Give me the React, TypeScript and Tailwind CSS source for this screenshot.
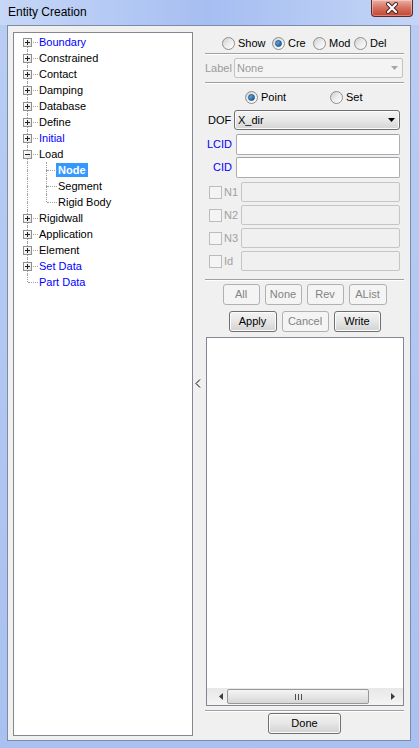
import React from 'react';

type TreeItem = {
  label: string;
  blue?: boolean;
  expander?: 'plus' | 'minus';
  children?: string[];
};

const tree: TreeItem[] = [
  { label: 'Boundary', blue: true, expander: 'plus' },
  { label: 'Constrained', expander: 'plus' },
  { label: 'Contact', expander: 'plus' },
  { label: 'Damping', expander: 'plus' },
  { label: 'Database', expander: 'plus' },
  { label: 'Define', expander: 'plus' },
  { label: 'Initial', blue: true, expander: 'plus' },
  { label: 'Load', expander: 'minus', children: ['Node', 'Segment', 'Rigid Body'] },
  { label: 'Rigidwall', expander: 'plus' },
  { label: 'Application', expander: 'plus' },
  { label: 'Element', expander: 'plus' },
  { label: 'Set Data', blue: true, expander: 'plus' },
  { label: 'Part Data', blue: true },
];

const Expander = ({ type }: { type: 'plus' | 'minus' }) => (
  <span className="absolute left-[4px] top-[4px] z-10 w-[9px] h-[9px] border border-[#8e8f8f] bg-linear-to-br from-white to-[#e2e2e2]">
    <span className="absolute left-[1px] top-[3px] w-[5px] h-[1px] bg-[#1f1f1f]" />
    {type === 'plus' && <span className="absolute left-[3px] top-[1px] w-[1px] h-[5px] bg-[#1f1f1f]" />}
  </span>
);

// one indent column of the tree, with its dotted connector lines
const Gutter = ({
  top,
  bottom,
  branch,
  expander,
}: {
  top?: boolean;
  bottom?: boolean;
  branch?: boolean;
  expander?: 'plus' | 'minus';
}) => (
  <span className="relative w-[19px] h-4 shrink-0">
    {top && <span className="absolute left-[8px] top-0 h-[8px] border-l border-dotted border-[#a0a0a0]" />}
    {bottom && <span className="absolute left-[8px] top-[8px] h-[8px] border-l border-dotted border-[#a0a0a0]" />}
    {branch && <span className="absolute left-[9px] top-[8px] w-[10px] border-t border-dotted border-[#a0a0a0]" />}
    {expander && <Expander type={expander} />}
  </span>
);

const Tree = () => (
  <div className="ml-[5px] mt-[6px] mb-[4px] w-[180px] shrink-0 border border-[#828790] bg-white pl-[5px] pt-[1px]">
    {tree.map((item, i) => {
      const last = i === tree.length - 1;
      return (
        <React.Fragment key={item.label}>
          <div className="flex items-center h-4">
            <Gutter top={i > 0} bottom={!last} branch expander={item.expander} />
            <span className={'ml-[1px] leading-4 whitespace-nowrap ' + (item.blue ? 'text-[#0000ff]' : 'text-black')}>
              {item.label}
            </span>
          </div>
          {item.children?.map((child, j) => (
            <div key={child} className="flex items-center h-4">
              <Gutter top bottom />
              <Gutter top bottom={j < item.children!.length - 1} branch />
              {child === 'Node' ? (
                <span className="-ml-[1px] px-[2px] leading-[14px] bg-[#3399ff] text-white font-bold whitespace-nowrap">
                  {child}
                </span>
              ) : (
                <span className="ml-[1px] leading-4 whitespace-nowrap">{child}</span>
              )}
            </div>
          ))}
        </React.Fragment>
      );
    })}
  </div>
);

const Radio = ({ checked }: { checked?: boolean }) => (
  <span className="w-[13px] h-[13px] shrink-0 rounded-full border border-[#8e8f8f] bg-linear-to-br from-[#cfcfcf] via-[#ececec] to-white flex items-center justify-center">
    {checked && (
      <span className="w-[7px] h-[7px] rounded-full border border-[#1b4f86] bg-linear-to-br from-[#6fb4ef] to-[#0f5aa3]" />
    )}
  </span>
);

const RadioOpt = ({ label, checked, className }: { label: string; checked?: boolean; className?: string }) => (
  <span className={'flex items-center gap-[3px] ' + (className ?? '')}>
    <Radio checked={checked} />
    <span className="leading-[13px] whitespace-nowrap">{label}</span>
  </span>
);

const Separator = ({ className }: { className?: string }) => (
  <div className={'h-[2px] border-t border-b border-t-[#a0a0a0] border-b-white shrink-0 ' + (className ?? '')} />
);

const DownArrow = ({ color }: { color: string }) => (
  <svg width="7" height="4" viewBox="0 0 7 4">
    <polygon points="0,0 7,0 3.5,4" fill={color} />
  </svg>
);

const Button = ({ label, disabled, className }: { label: string; disabled?: boolean; className?: string }) => (
  <div
    className={
      'h-full flex items-center justify-center rounded-[3px] border leading-none ' +
      (disabled
        ? 'border-[#adb2b5] bg-[#f4f4f4] text-[#838383] '
        : 'border-[#707070] bg-linear-to-b from-[#f3f3f3] via-[#e6e6e6] to-[#d2d2d2] text-black shadow-[inset_0_0_0_1px_#fbfbfb] ') +
      (className ?? '')
    }
  >
    {label}
  </div>
);

const TextBox = ({ disabled }: { disabled?: boolean }) => (
  <div
    className={
      'flex-1 h-full mr-[4px] rounded-[2px] border ' +
      (disabled ? 'border-[#c5c5c5] bg-[#f0f0f0]' : 'border-[#abadb3] border-t-[#a0a2a8] bg-white')
    }
  />
);

const CheckRow = ({ label }: { label: string }) => (
  <div className="h-[20px] mt-[3px] flex items-center shrink-0">
    <div className="w-[36px] flex items-center pl-[4px]">
      <span className="w-[13px] h-[13px] border border-[#bcbcbc] bg-[#f4f4f4]" />
      <span className="ml-[2px] text-[#a0a0a0] leading-none">{label}</span>
    </div>
    <TextBox disabled />
  </div>
);

const CloseButton = () => (
  <div className="mr-[6px] w-[42px] h-[17px] rounded-b-[4px] border border-t-0 border-[#5b2a24] bg-linear-to-b from-[#eab0a4] via-[#d6705f] to-[#c4432f] shadow-[inset_0_0_0_1px_rgba(255,255,255,0.35)] flex items-center justify-center">
    <svg width="14" height="12" viewBox="0 0 14 12">
      <path d="M3 2 L11 10 M11 2 L3 10" stroke="#3d2420" strokeWidth="4" strokeLinecap="round" />
      <path d="M3 2 L11 10 M11 2 L3 10" stroke="#ffffff" strokeWidth="2.2" strokeLinecap="round" />
    </svg>
  </div>
);

const ScrollBar = () => (
  <div className="h-[17px] shrink-0 flex bg-linear-to-b from-[#e8e8e8] to-[#f4f4f4]">
    <div className="w-[19px] flex items-center justify-end pr-[3px]">
      <svg width="4" height="7" viewBox="0 0 4 7">
        <polygon points="4,0 0,3.5 4,7" fill="#3c3c3c" />
      </svg>
    </div>
    <div className="flex-1 flex items-stretch py-[1px]">
      <div className="ml-[1px] w-[142px] rounded-[2px] border border-[#979797] bg-linear-to-b from-[#f4f4f4] via-[#e6e6e6] to-[#d6d6d6] flex items-center justify-center gap-[2px]">
        <span className="w-[1px] h-[6px] bg-[#4d4d4d]" />
        <span className="w-[1px] h-[6px] bg-[#4d4d4d]" />
        <span className="w-[1px] h-[6px] bg-[#4d4d4d]" />
      </div>
    </div>
    <div className="w-[17px] flex items-center pl-[5px]">
      <svg width="4" height="7" viewBox="0 0 4 7">
        <polygon points="0,0 4,3.5 0,7" fill="#3c3c3c" />
      </svg>
    </div>
  </div>
);

const RightPanel = () => (
  <div className="w-[209px] shrink-0 flex flex-col pl-[4px] pr-[6px] pt-[11px] pb-[6px]">
    <div className="h-[13px] flex items-center pl-[17px] shrink-0">
      <RadioOpt label="Show" className="w-[50px]" />
      <RadioOpt label="Cre" checked className="w-[41px]" />
      <RadioOpt label="Mod" className="w-[41px]" />
      <RadioOpt label="Del" />
    </div>
    <Separator className="mt-[3px]" />
    <div className="h-[20px] mt-[3px] flex items-center shrink-0">
      <span className="w-[29px] text-[#9a9a9a] leading-none">Label</span>
      <div className="flex-1 h-full mr-[1px] rounded-[2px] border border-[#c3c3c3] bg-[#f4f4f4] flex items-center pl-[2px] pr-[4px] text-[#9a9a9a]">
        <span className="flex-1">None</span>
        <DownArrow color="#a6a6a6" />
      </div>
    </div>
    <Separator className="mt-[4px]" />
    <div className="h-[13px] mt-[7px] flex items-center pl-[40px] shrink-0">
      <RadioOpt label="Point" checked className="w-[85px]" />
      <RadioOpt label="Set" />
    </div>
    <div className="h-[20px] mt-[6px] flex items-center shrink-0">
      <span className="w-[29px] pl-[3px] leading-none">DOF</span>
      <div className="flex-1 h-full mr-[4px] rounded-[3px] border border-[#707070] bg-linear-to-b from-[#f3f3f3] via-[#e8e8e8] to-[#d5d5d5] shadow-[inset_0_0_0_1px_#fbfbfb] flex items-center pl-[3px] pr-[4px]">
        <span className="flex-1">X_dir</span>
        <DownArrow color="#000000" />
      </div>
    </div>
    <div className="h-[21px] mt-[4px] flex items-center shrink-0">
      <span className="w-[31px] pr-[4px] text-right text-[#0000ff] leading-none">LCID</span>
      <TextBox />
    </div>
    <div className="h-[21px] mt-[2px] flex items-center shrink-0">
      <span className="w-[31px] pr-[4px] text-right text-[#0000ff] leading-none">CID</span>
      <TextBox />
    </div>
    <div className="mt-[1px]" />
    <CheckRow label="N1" />
    <CheckRow label="N2" />
    <CheckRow label="N3" />
    <CheckRow label="Id" />
    <Separator className="mt-[8px]" />
    <div className="h-[21px] mt-[3px] flex justify-center gap-[5px] shrink-0">
      <Button label="All" disabled className="w-[37px]" />
      <Button label="None" disabled className="w-[37px]" />
      <Button label="Rev" disabled className="w-[37px]" />
      <Button label="AList" disabled className="w-[38px]" />
    </div>
    <div className="h-[21px] mt-[6px] flex justify-center gap-[5px] shrink-0">
      <Button label="Apply" className="w-[48px]" />
      <Button label="Cancel" disabled className="w-[47px]" />
      <Button label="Write" className="w-[47px]" />
    </div>
    <div className="flex-1 min-h-0 mt-[5px] ml-[1px] flex flex-col border border-[#828790] bg-white">
      <div className="flex-1" />
      <ScrollBar />
    </div>
    <Separator className="mt-[4px]" />
    <div className="h-[21px] mt-[1px] flex justify-center shrink-0">
      <Button label="Done" className="w-[73px]" />
    </div>
  </div>
);

export default function App() {
  return (
    <div className="w-[419px] h-[748px] flex flex-col overflow-hidden bg-linear-to-b from-[#b9cdf4] to-[#a9c1f0] font-['Liberation_Sans',Arial,sans-serif] text-[11px] text-black">
      <div className="h-[25px] shrink-0 flex items-start bg-linear-to-r from-[#c6d7f7] via-[#a6bef1] to-[#c4d5f6]">
        <span className="pl-[8px] pt-[5px] text-[12px] leading-[15px]">Entity Creation</span>
        <div className="flex-1" />
        <CloseButton />
      </div>
      <div className="flex-1 min-h-0 flex pl-[7px] pr-[8px] pb-[7px]">
        <div className="flex-1 min-w-0 flex border border-[#7d8ba6] bg-[#f0f0f0]">
          <Tree />
          <div className="w-[8px] shrink-0 flex items-center pl-[2px]">
            <svg width="6" height="9" viewBox="0 0 6 9">
              <polyline points="5,0.5 1,4.5 5,8.5" fill="none" stroke="#000" strokeWidth="1" />
            </svg>
          </div>
          <RightPanel />
        </div>
      </div>
    </div>
  );
}
